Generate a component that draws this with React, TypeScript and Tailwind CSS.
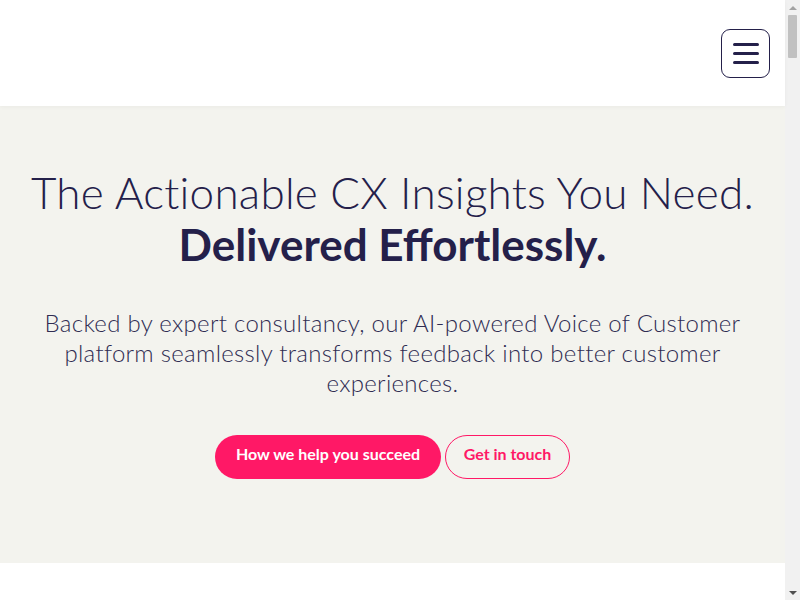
import React from "react";

function Scrollbar() {
  return (
    <div className="w-[15px] h-[600px] bg-[#f1f1f1] flex flex-col items-center shrink-0">
      <div className="h-[15px] w-full flex items-center justify-center">
        <div className="w-0 h-0 border-l-[4px] border-r-[4px] border-b-[4px] border-l-transparent border-r-transparent border-b-[#a3a3a3]" />
      </div>
      <div className="w-[9px] h-[43px] rounded-[1px] bg-[#c1c1c1]" />
      <div className="flex-1" />
      <div className="h-[15px] w-full flex items-center justify-center">
        <div className="w-0 h-0 border-l-[4px] border-r-[4px] border-t-[4px] border-l-transparent border-r-transparent border-t-[#505050]" />
      </div>
    </div>
  );
}

export default function App() {
  return (
    <div className="h-[600px] overflow-hidden flex bg-white" style={{ fontFamily: "Lato, 'Open Sans', sans-serif" }}>
      <div className="flex-1 min-w-0">
        <header className="h-[106px] bg-white flex items-center justify-end pr-[15px] relative z-10 shadow-[0_1px_4px_rgba(0,0,0,0.04)]">
          <button className="w-[49px] h-[49px] rounded-[9px] border border-[#24204a] flex flex-col items-center justify-center gap-[6px]">
            <span className="block w-[26px] h-[3px] rounded-full bg-[#24204a]" />
            <span className="block w-[26px] h-[3px] rounded-full bg-[#24204a]" />
            <span className="block w-[26px] h-[3px] rounded-full bg-[#24204a]" />
          </button>
        </header>
        <section className="bg-[#f3f3ee] h-[457px] flex flex-col items-center pt-[60px] text-[#24204a]">
          <h1 className="text-center text-[44px] leading-[52px]">
            <span className="font-light block tracking-[0.25px]">The Actionable CX Insights You Need.</span>
            <span className="font-bold block">Delivered Effortlessly.</span>
          </h1>
          <p className="mt-[38px] text-center text-[24px] leading-[30px] tracking-[0.3px] text-[#2f2c52] font-light">
            Backed by expert consultancy, our AI-powered Voice of Customer
            <br />
            platform seamlessly transforms feedback into better customer
            <br />
            experiences.
          </p>
          <div className="mt-[37px] flex gap-[4px]">
            <a className="h-[44px] w-[226px] pb-[6px] justify-center rounded-full bg-[#ff1866] text-white text-[16px] font-bold flex items-center">How we help you succeed</a>
            <a className="h-[44px] w-[125px] pb-[6px] justify-center rounded-full border border-[#ff1866] text-[#ff1866] text-[16px] font-bold flex items-center">Get in touch</a>
          </div>
        </section>
        <section className="h-[400px] bg-white" />
      </div>
      <Scrollbar />
    </div>
  );
}
